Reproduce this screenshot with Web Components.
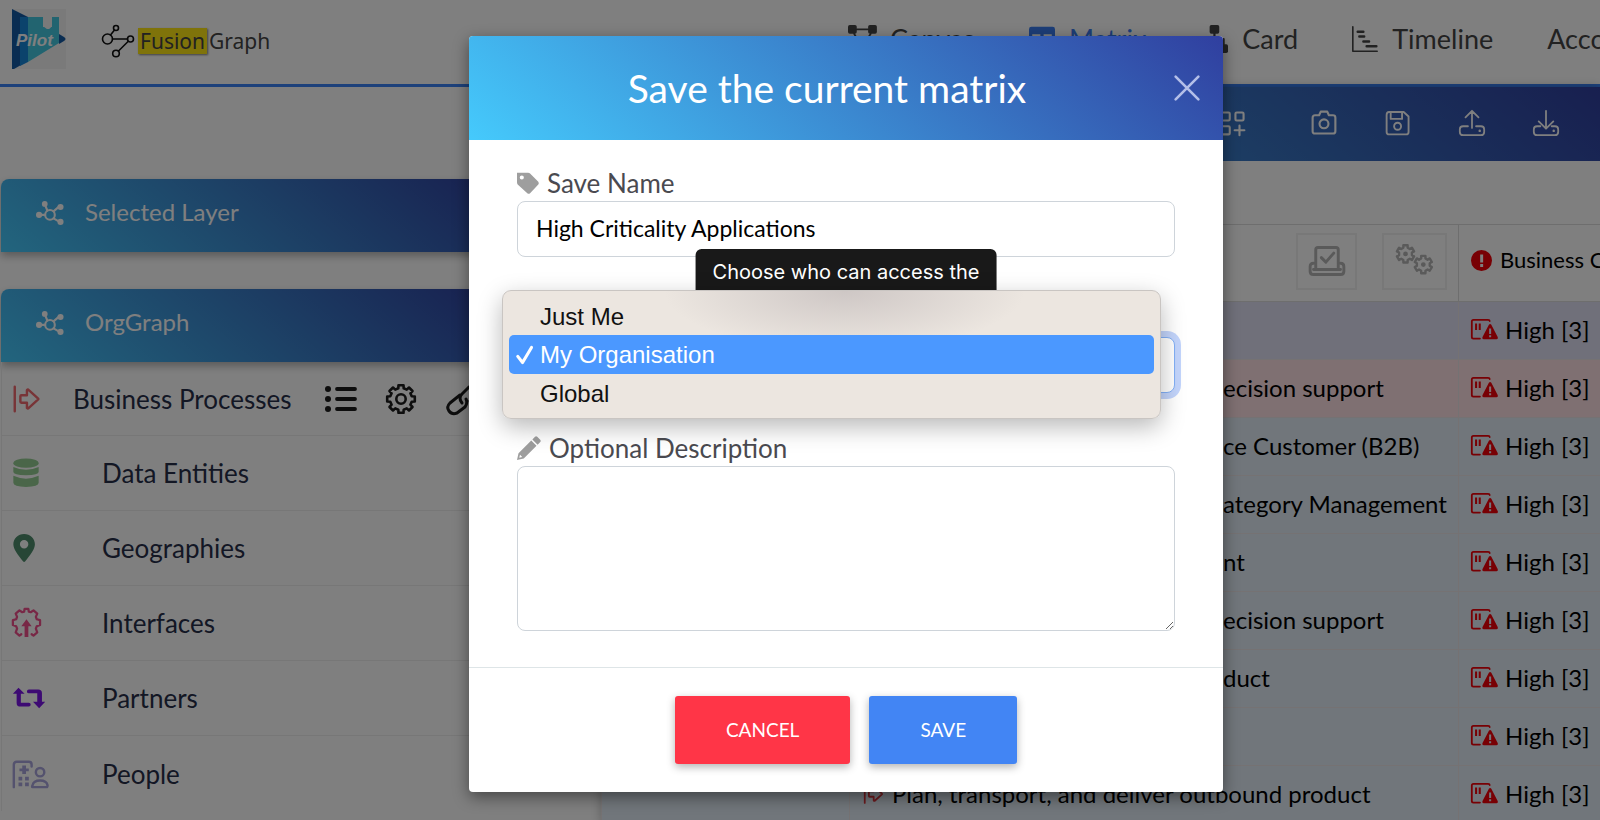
<!DOCTYPE html>
<html lang="en">
  <head>
    <meta charset="UTF-8" />
    <meta name="viewport" content="width=device-width, initial-scale=1.0" />
    <title>FusionGraph - Matrix</title>
    <style>
      body {
        margin: 0;
        font-family: Lato, "Open Sans", sans-serif;
        overflow: hidden;
      }
    </style>
  </head>
  <body>
    <fusion-app>
      <app-header slot="header"></app-header>

      <side-panel slot="side" heading="Selected Layer"></side-panel>
      <side-panel slot="side" heading="OrgGraph">
        <layer-item icon="process" color="#f0696f" tools>Business Processes</layer-item>
        <layer-item icon="database" color="#94cd92">Data Entities</layer-item>
        <layer-item icon="pin" color="#4f8c6c">Geographies</layer-item>
        <layer-item icon="interface" color="#f0508c">Interfaces</layer-item>
        <layer-item icon="swap" color="#7a14e6">Partners</layer-item>
        <layer-item icon="people" color="#a9a5dc">People</layer-item>
      </side-panel>

      <matrix-toolbar slot="main"></matrix-toolbar>
      <matrix-table slot="main"></matrix-table>

      <save-dialog slot="dialog">
        <span slot="title">Save the current matrix</span>
      </save-dialog>
    </fusion-app>

    <template id="app-template">
      <style>
        :host {
          display: block;
          position: relative;
          height: 100vh;
          overflow: hidden;
          background: #fff;
        }

        .columns {
          display: grid;
          grid-template-columns: 601px 1fr;
        }

        .side {
          display: flex;
          flex-direction: column;
          gap: 37px;
          padding: 92px 100px 0 1px;
        }

        .main {
          min-width: 0;
          box-shadow: 0 0 10px rgba(0, 0, 0, 0.25);
        }

        .overlay {
          position: absolute;
          inset: 0;
          display: flex;
          justify-content: center;
          align-items: flex-start;
          padding: 36px 0 0 92px;
          background: rgba(0, 0, 0, 0.5);
        }
      </style>
      <slot name="header"></slot>
      <div class="columns">
        <aside class="side"><slot name="side"></slot></aside>
        <main class="main"><slot name="main"></slot></main>
      </div>
      <div class="overlay"><slot name="dialog"></slot></div>
    </template>

    <template id="header-template">
      <style>
        :host {
          display: flex;
          align-items: center;
          height: 84px;
          border-bottom: 3px solid #3a82f7;
          color: #444;
          overflow: hidden;
        }

        .logo {
          display: block;
          width: 54px;
          height: 60px;
          margin: 0 36px 6px 12px;
          flex: none;
        }

        .brand {
          display: flex;
          align-items: center;
          gap: 4px;
          flex: 1 0 0;
          padding-bottom: 2px;
          font: 21px/28px "Noto Sans", sans-serif;
          color: #444;
        }

        .brand ui-icon {
          color: #111;
        }

        mark {
          display: inline-block;
          margin-right: 2px;
          padding: 0 2px;
          background: #ffe614;
          color: #444;
          line-height: 26px;
          box-shadow: 1px 1px 2px rgba(0, 0, 0, 0.5);
        }

        nav {
          display: flex;
          gap: 54px;
          flex: 0 0 752px;
          min-width: 0;
          padding-bottom: 6px;
        }

        a {
          display: flex;
          align-items: center;
          gap: 14px;
          font-size: 27px;
          line-height: 32px;
          color: inherit;
          text-decoration: none;
          white-space: nowrap;
        }

        a.active {
          color: #3a7df0;
        }
      </style>
      <svg class="logo" viewBox="0 0 54 60" role="img" aria-label="Pilot logo">
        <rect width="54" height="60" fill="#f4f4f4" />
        <path d="M0 0 16 8v44L2 60H0z" fill="#145aa4" />
        <path d="M8 8h8v45l-8 4z" fill="#1787d8" />
        <path d="M16 8h15v10c3 0 2 2 5 2s2-2 4-2V8h7v26L16 53z" fill="#44c8e0" />
        <path d="M47 25l5 3q3 2 0 4l-5 3z" fill="#145aa4" />
        <text x="4" y="37" font-family="Liberation Sans Narrow, Liberation Sans, sans-serif" font-size="17" font-weight="bold" font-style="italic" fill="#fff">Pilot</text>
      </svg>
      <div class="brand">
        <ui-icon name="graph" size="32"></ui-icon>
        <span><mark>Fusion</mark>Graph</span>
      </div>
      <nav>
        <a href="#canvas"><ui-icon name="canvas" size="28"></ui-icon>Canvas</a>
        <a href="#matrix" class="active"><ui-icon name="grid" size="26"></ui-icon>Matrix</a>
        <a href="#card"><ui-icon name="card" size="28"></ui-icon>Card</a>
        <a href="#timeline"><ui-icon name="timeline" size="26"></ui-icon>Timeline</a>
        <a href="#account">Account</a>
      </nav>
    </template>

    <template id="panel-template">
      <style>
        :host {
          display: block;
        }

        header {
          display: flex;
          align-items: center;
          box-sizing: border-box;
          gap: 21px;
          height: 73px;
          padding: 0 0 4px 35px;
          border-radius: 8px 8px 0 0;
          background: linear-gradient(40deg, #45cafc, #303f9f);
          box-shadow: 0 4px 8px rgba(0, 0, 0, 0.3);
          color: #fff;
        }

        h2 {
          margin: 0;
          padding-bottom: 4px;
          font-size: 24px;
          line-height: 32px;
          font-weight: 400;
        }

        .items {
          border-left: 1px solid #eee;
        }
      </style>
      <header>
        <ui-icon name="network" size="28"></ui-icon>
        <h2></h2>
      </header>
      <div class="items"><slot></slot></div>
    </template>

    <template id="layer-template">
      <style>
        :host {
          display: flex;
          align-items: center;
          box-sizing: border-box;
          height: 75px;
          padding-left: 9px;
          border-bottom: 1px solid #eee;
          color: #272e49;
          font-size: 26px;
          line-height: 32px;
        }

        :host([tools]) {
          height: 74px;
        }

        :host(:last-child) {
          border-bottom: 0;
        }

        .icon {
          flex: 0 0 91px;
        }

        :host([tools]) .icon {
          flex-basis: 62px;
        }

        .tools {
          display: none;
          gap: 28px;
          margin-left: auto;
          padding-right: 24px;
        }

        :host([tools]) .tools {
          display: flex;
        }

        button {
          padding: 0;
          border: 0;
          background: none;
          color: #1c1c1c;
        }
      </style>
      <ui-icon class="icon" size="32"></ui-icon>
      <slot></slot>
      <div class="tools">
        <button aria-label="List"><ui-icon name="list" size="32"></ui-icon></button>
        <button aria-label="Settings"><ui-icon name="gear" size="32"></ui-icon></button>
        <button aria-label="Link"><ui-icon name="link" size="32"></ui-icon></button>
      </div>
    </template>

    <template id="toolbar-template">
      <style>
        :host {
          display: flex;
          justify-content: flex-end;
          align-items: center;
          box-sizing: border-box;
          gap: 48px;
          height: 74px;
          padding: 0 41px 2px 0;
          background: linear-gradient(40deg, #45cafc, #303f9f);
        }

        button {
          padding: 0;
          border: 0;
          background: none;
          color: #fff;
        }

        .apart {
          margin-right: 17px;
        }
      </style>
      <button class="apart" aria-label="Add view"><ui-icon name="addview" size="26"></ui-icon></button>
      <button aria-label="Snapshot"><ui-icon name="camera" size="26"></ui-icon></button>
      <button aria-label="Save"><ui-icon name="save" size="26"></ui-icon></button>
      <button aria-label="Upload"><ui-icon name="upload" size="26"></ui-icon></button>
      <button aria-label="Download"><ui-icon name="download" size="26"></ui-icon></button>
    </template>

    <template id="table-template">
      <style>
        :host {
          display: block;
          padding-top: 63px;
        }

        table {
          width: 100%;
          table-layout: fixed;
          border-collapse: collapse;
          font-size: 24px;
          line-height: 28px;
        }

        .layer-col {
          width: 248px;
        }

        .process-col {
          width: 609px;
        }

        th {
          height: 72px;
          padding: 0 0 4px;
          border: 1px solid #ddd;
          font-size: 22px;
          font-weight: 400;
        }

        td {
          height: 57px;
          padding: 0;
          border: 1px solid #ebe4e6;
          background: #e2edf7;
        }

        th:last-child,
        td:last-child {
          border-right: 0;
        }

        tr.lilac td {
          background: #e1e1f5;
        }

        tr.rose td {
          background: #ffe1e5;
        }

        .actions {
          display: flex;
          justify-content: flex-end;
          gap: 25px;
          padding-right: 11px;
        }

        .actions button {
          width: 61px;
          height: 57px;
          padding: 0;
          border: 2px solid #f0f0f0;
          background: none;
          color: #b4b4b4;
        }

        .actions button:last-child {
          width: 65px;
        }

        .actions ui-icon {
          margin: auto;
        }

        .cell {
          display: flex;
          align-items: center;
          gap: 8px;
          padding: 0 0 2px 12px;
          white-space: nowrap;
          overflow: hidden;
        }

        .tail {
          padding: 0 0 2px 373px;
          white-space: nowrap;
        }

        .alert {
          color: #f00008;
        }

        .process {
          color: #d8373d;
        }
      </style>
      <table>
        <colgroup>
          <col class="layer-col" />
          <col class="process-col" />
          <col />
        </colgroup>
        <thead>
          <tr>
            <th></th>
            <th>
              <div class="actions">
                <button aria-label="Check"><ui-icon name="laptop" size="36"></ui-icon></button>
                <button aria-label="Configure"><ui-icon name="gears" size="38"></ui-icon></button>
              </div>
            </th>
            <th>
              <div class="cell">
                <ui-icon class="alert" name="alert" size="21"></ui-icon>Business Criticality
              </div>
            </th>
          </tr>
        </thead>
        <tbody></tbody>
      </table>
    </template>

    <template id="dialog-template">
      <style>
        :host {
          display: block;
          flex: 0 1 754px;
          border-radius: 4px;
          background: #fff;
          box-shadow: 0 5px 16px rgba(0, 0, 0, 0.45);
        }

        * {
          box-sizing: border-box;
        }

        header {
          display: flex;
          align-items: center;
          gap: 10px;
          height: 104px;
          padding: 0 22px;
          border-radius: 4px 4px 0 0;
          background: linear-gradient(40deg, #45cafc, #303f9f);
          color: #fff;
        }

        h1 {
          flex: 1;
          margin: 0;
          font-size: 39px;
          line-height: 48px;
          font-weight: 400;
          text-align: center;
        }

        .close {
          padding: 0;
          border: 0;
          background: none;
          color: #b4bfe8;
        }

        form {
          display: flex;
          flex-direction: column;
          gap: 40px;
          padding: 28px 48px 36px;
        }

        .field {
          display: flex;
          flex-direction: column;
          gap: 3px;
        }

        label,
        .field-head {
          display: flex;
          align-items: center;
          gap: 8px;
          min-height: 30px;
          font-size: 26px;
          line-height: 30px;
          color: #4a4a50;
        }

        label ui-icon {
          color: #9e9e9e;
        }

        input,
        select,
        textarea {
          width: 100%;
          height: 56px;
          margin: 0;
          padding: 0 18px;
          border: 1px solid #ced4da;
          border-radius: 8px;
          background: #fff;
          color: #000;
          font: 23px/32px Lato, sans-serif;
          outline: 0;
        }

        input {
          padding-bottom: 2px;
        }

        select {
          appearance: none;
          border-color: #83b1f8;
          box-shadow: 0 0 0 6px #c3d5fc;
        }

        textarea {
          display: block;
          height: 165px;
          resize: both;
        }

        .access {
          position: relative;
          padding-top: 7px;
        }

        .tooltip {
          position: absolute;
          bottom: 100%;
          left: 50%;
          height: 49px;
          margin-bottom: -1px;
          padding: 9px 17px;
          border-radius: 6px;
          background: #191919;
          color: #fff;
          font: 20px/28px Inter, sans-serif;
          white-space: nowrap;
          transform: translateX(-50%);
        }

        .menu {
          position: absolute;
          top: -7px;
          left: -15px;
          right: 14px;
          padding: 6px;
          border: 1px solid #c9c5c2;
          border-radius: 9px;
          background: radial-gradient(ellipse 180px 60px at 52% 0, #cec7c5, #ece6e0);
          box-shadow: 0 8px 24px rgba(0, 0, 0, 0.28);
          font: 24px/39px "Liberation Sans", Arial, sans-serif;
        }

        .option {
          display: flex;
          align-items: center;
          gap: 3px;
          width: 100%;
          height: 38px;
          padding: 0 6px;
          border: 0;
          border-radius: 5px;
          background: none;
          color: #111;
          font: inherit;
        }

        .option:nth-child(2) {
          height: 39px;
        }

        .option ui-icon {
          visibility: hidden;
        }

        .option[aria-selected="true"] {
          background: #4b98ff;
          color: #fff;
        }

        .option[aria-selected="true"] ui-icon {
          visibility: visible;
        }

        footer {
          display: flex;
          justify-content: center;
          gap: 19px;
          padding: 28px;
          border-top: 1px solid #dee5e7;
        }

        footer button {
          height: 68px;
          padding: 0 51px;
          border: 0;
          border-radius: 3px;
          background: #ff3547;
          box-shadow: 0 3px 8px rgba(0, 0, 0, 0.3);
          color: #fff;
          font: 19px/24px Lato, sans-serif;
          text-transform: uppercase;
        }

        footer .primary {
          background: #4285f4;
        }
      </style>
      <header>
        <h1><slot name="title"></slot></h1>
        <button class="close" aria-label="Close"><ui-icon name="close" size="28"></ui-icon></button>
      </header>
      <form>
        <div class="field">
          <label for="save-name"><ui-icon name="tag" size="22"></ui-icon>Save Name</label>
          <input id="save-name" type="text" value="High Criticality Applications" />
        </div>
        <div class="field access">
          <div class="field-head"></div>
          <select aria-label="Access">
            <option>Just Me</option>
            <option selected>My Organisation</option>
            <option>Global</option>
          </select>
          <div class="tooltip" role="tooltip">Choose who can access the</div>
          <div class="menu" role="listbox" aria-label="Access">
            <button type="button" class="option" role="option" aria-selected="false"><ui-icon name="tick" size="22"></ui-icon>Just Me</button>
            <button type="button" class="option" role="option" aria-selected="true"><ui-icon name="tick" size="22"></ui-icon>My Organisation</button>
            <button type="button" class="option" role="option" aria-selected="false"><ui-icon name="tick" size="22"></ui-icon>Global</button>
          </div>
        </div>
        <div class="field">
          <label for="description"><ui-icon name="pencil" size="24"></ui-icon>Optional Description</label>
          <textarea id="description"></textarea>
        </div>
      </form>
      <footer>
        <button type="button">Cancel</button>
        <button type="button" class="primary">Save</button>
      </footer>
    </template>

    <script>
      const stroke = (width, body) =>
        `<g fill="none" stroke="currentColor" stroke-width="${width}" stroke-linecap="round" stroke-linejoin="round">${body}</g>`;

      // outline of a cog with evenly spread teeth, centred on cx, cy
      const cog = (cx, cy, inner, outer, teeth = 8) => {
        const points = [];
        const half = Math.PI / teeth;
        for (let i = 0; i < teeth; i++) {
          const mid = i * half * 2 - Math.PI / 2;
          [[-0.62, inner], [-0.45, outer], [0.45, outer], [0.62, inner]].forEach(([turn, r]) => {
            const angle = mid + turn * half;
            points.push(
              `${(cx + r * Math.cos(angle)).toFixed(1)} ${(cy + r * Math.sin(angle)).toFixed(1)}`
            );
          });
        }
        return `M${points.join("L")}z`;
      };

      // every icon is drawn on a 32 x 32 grid
      const icons = {
        graph: stroke(1.6, '<circle cx="5.500" cy="14" r="5"/><circle cx="14" cy="3" r="2.500"/><circle cx="28.500" cy="14" r="3"/><circle cx="14" cy="28.500" r="3.300"/><path d="M8.500 10 12.500 5M10.500 14h15M26.300 16.300 16.500 26"/>'),
        canvas: '<rect width="10" height="10" rx="2"/><rect x="23" width="10" height="10" rx="2"/><rect x="11" y="22" width="10" height="10" rx="2"/>' + stroke(2, '<path d="M10 5h13M7 10l7 12M26 10l-8 12"/>'),
        grid: '<path d="M3 1h26q3 0 3 3v24q0 3-3 3H3q-3 0-3-3V4q0-3 3-3zm1 9v7h10v-7zm14 0v7h10v-7zM4 20v7h10v-7zm14 0v7h10v-7z" fill-rule="evenodd"/>',
        card: '<rect x="11" width="11" height="10" rx="2"/><rect y="22" width="11" height="10" rx="2"/><rect x="21" y="22" width="11" height="10" rx="2"/>' + stroke(2.5, '<path d="M16.500 9v7M5 23v-7h22v7"/>'),
        timeline: stroke(2, '<path d="M1 1v30h30"/>') + stroke(3, '<path d="M7 7h7M9 13h6M14 19h7M18 25h12"/>'),
        network: stroke(2.4, '<circle cx="16" cy="17" r="5.500"/><path d="M10 17H4M13 12l-3-7M20 13l7-6M20 21l7 4"/>') + '<circle cx="3.500" cy="17" r="3.500"/><circle cx="10" cy="4.500" r="3.300"/><circle cx="28" cy="8" r="3.500"/><circle cx="28" cy="25" r="3.500"/>',
        process: stroke(2.6, '<path d="M4 3v26M11 12h6V6.500q1-1 2 0l10 9q.5.500 0 1l-10 9q-1 1-2 0V20h-6q-1 0-1-1v-6q0-1 1-1z"/>'),
        database: '<ellipse cx="16" cy="5.500" rx="13.500" ry="5"/><path d="M2.500 9.500q13.500 6 27 0v5.500q0 3-13.500 3.500-13.500-.5-13.500-3.500zM2.500 19q13.500 6 27 0v7.500q0 4-13.500 4.500-13.500-.5-13.500-4.500z"/>',
        pin: '<path fill-rule="evenodd" d="M14 1C7.500 1 2.500 6 2.500 12 2.500 17 7 23 13 30.500q1 1 2 0c6-7.500 10.500-13.500 10.500-18.500C25.500 6 20.500 1 14 1zm0 6.500a4.500 4.500 0 1 1 0 9 4.500 4.500 0 0 1 0-9z"/>',
        interface: stroke(2.4, '<path d="M11 28l-2 1.500-4-3.500 1.500-4-1-2.500L2 18v-5l3.500-1 1-2.500L5 6l4-3.500 3 2 2-.500.500-3h4l.5 3 2 .5 3-2L28 6l-1.500 3.500 1 2.500 3.500 1v5l-3.500 1.500-1 2.500 1.500 4-4 3.500-2-1.500"/>') + '<path d="M16.500 12 22 19.500h-3.500V31h-4V19.500H11z"/>',
        swap: '<path d="M8 5l6.500 6.500h-4V21H19q2 0 2 2t-2 2H9q-3 0-3-4v-9.500H2zM19 7h10q4 0 4 4v9h3.500L30 27l-6.500-7H28v-9h-9q-2 0-2-2t2-2z"/>',
        people: stroke(2.6, '<path d="M3 30V6q0-3 3-3h13q3 0 3 3v2M23 30h15q1 0 1-2-1-5-8-5t-8 5q-1 2 0 2z"/><circle cx="31" cy="14" r="4.500"/>') + '<path d="M12 7h4v3h3v3h-3v3h-4v-3H9v-3h3zM8 19h4v4H8zM15 19h4v4h-4zM8 25h4v4H8zM15 25h4v4h-4z"/>',
        list: '<circle cx="3" cy="6" r="3"/><circle cx="3" cy="16" r="3"/><circle cx="3" cy="26" r="3"/>' + stroke(3.8, '<path d="M12 6h18M12 16h18M12 26h18"/>'),
        gear: stroke(2.6, `<path d="${cog(16, 16, 11, 14)}"/><circle cx="16" cy="16" r="4.700"/>`),
        link: stroke(3, '<path d="M15 12l-10 8q-4 4-1 8t8 2l8-6q3-4 1-8"/><path d="M17 20q-4-5 0-9l7-7q5-3 8 1t-1 8l-6 5"/>'),
        addview: stroke(2.6, '<rect x="2" y="3" width="10" height="10" rx="1.500"/><rect x="19" y="3" width="10" height="10" rx="1.500"/><rect x="2" y="20" width="10" height="10" rx="1.500"/><path d="M24 19v12M18 25h12"/>'),
        camera: stroke(2.6, '<path d="M5 6.500h5L12 2h8l2 4.500h5q3 0 3 3V26q0 3-3 3H5q-3 0-3-3V9.500q0-3 3-3z"/><circle cx="16" cy="17" r="5.500"/>'),
        save: stroke(2.3, '<path d="M5 2.500h18l6 5.500v19q0 3-3 3H5q-3 0-3-3v-21q0-3.500 3-3.500zM7 3v8h14V3"/><circle cx="15.500" cy="20" r="4.300"/>'),
        upload: stroke(2.2, '<path d="M16 22V1M8 9l8-8 8 8M11 20H5q-4 0-4 4v3q0 4 4 4h22q4 0 4-4v-3q0-4-4-4h-6"/><path d="M25.500 25.500v.2" stroke-width="3"/>'),
        download: stroke(2.2, '<path d="M16 1v21M7 14l9 9 9-9M9 20H5q-4 0-4 4v3q0 4 4 4h22q4 0 4-4v-3q0-4-4-4h-4"/><path d="M25.500 25.500v.2" stroke-width="3"/>'),
        laptop: stroke(2.6, '<path d="M6 22V6q0-2 2-2h16q2 0 2 2v16M4 18q-3 0-3 3v4q0 3 3 3h24q3 0 3-3v-4q0-3-3-3M4 23.500h24M11 13l4 4 7-8"/>'),
        gears: stroke(2, `<path d="${cog(8, 10, 5.500, 7.500, 6)}"/><circle cx="8" cy="10" r="1"/><path d="${cog(23, 19, 5.500, 7.500, 6)}"/><circle cx="23" cy="19" r="1"/>`),
        alert: '<path fill-rule="evenodd" d="M16 0a16 16 0 1 1 0 32 16 16 0 0 1 0-32zM14 7v12h4.500V7zm0 14.500V26h4.500v-4.500z"/>',
        risk: stroke(2.2, '<path d="M23 5q0-1.500-2-1.500H3q-2 0-2 2v19q0 2 2 2h8"/>') + '<path d="M5 8h2.500v8H5zM9.500 8H12v8H9.500z"/><path fill-rule="evenodd" d="M22 9.500q1.500-1.500 3 0l8 15.500q.5 2.500-1.500 2.500h-16q-2 0-1.500-2.500zM22.300 14v7h2.500v-7zm0 8.500V25h2.500v-2.500z"/>',
        tag: '<path fill-rule="evenodd" d="M0 1h16q2 0 3 1l12 12q1.500 2 0 4L19 31q-2 1.500-4 0L1 18q-1-1-1-3zm7 4a3 3 0 1 0 0 6 3 3 0 0 0 0-6z"/>',
        pencil: '<path fill-rule="evenodd" d="M19 6l7 7L9 30l-9 2 2-9zM20.500 4.500l3.500-3.500q1.500-1.500 3 0L31 5q1.500 1.500 0 3l-3.500 3.500zM4 25l-1 4 4-1z"/>',
        tick: stroke(4.5, '<path d="M4 18l7 9L24 5"/>'),
        close: stroke(3, '<path d="M3 3l26 26M29 3 3 29"/>')
      };

      class UiIcon extends HTMLElement {
        connectedCallback() {
          if (this.shadowRoot) return;
          const size = Number(this.getAttribute("size")) || 24;
          this.attachShadow({ mode: "open" }).innerHTML = `
            <style>
              :host { display: block; flex: none; width: ${size}px; height: ${size}px; }
              svg { display: block; overflow: visible; }
            </style>
            <svg width="${size}" height="${size}" viewBox="0 0 32 32" fill="currentColor" aria-hidden="true">${icons[this.getAttribute("name")] || ""}</svg>`;
        }
      }

      class TemplateElement extends HTMLElement {
        connectedCallback() {
          if (this.shadowRoot) return;
          const template = document.getElementById(this.constructor.template);
          this.attachShadow({ mode: "open" }).appendChild(template.content.cloneNode(true));
          this.render();
        }

        render() {}
      }

      class FusionApp extends TemplateElement {
        static template = "app-template";
      }

      class AppHeader extends TemplateElement {
        static template = "header-template";
      }

      class SidePanel extends TemplateElement {
        static template = "panel-template";

        render() {
          this.shadowRoot.querySelector("h2").textContent = this.getAttribute("heading");
        }
      }

      class LayerItem extends TemplateElement {
        static template = "layer-template";

        render() {
          const old = this.shadowRoot.querySelector(".icon");
          const icon = document.createElement("ui-icon");
          icon.className = "icon";
          icon.setAttribute("name", this.getAttribute("icon"));
          icon.setAttribute("size", "30");
          icon.style.color = this.getAttribute("color");
          old.replaceWith(icon);
        }
      }

      class MatrixToolbar extends TemplateElement {
        static template = "toolbar-template";
      }

      class MatrixTable extends TemplateElement {
        static template = "table-template";

        render() {
          const rows = [
            { tone: "lilac" },
            { tone: "rose", tail: "ecision support" },
            { tail: "ce Customer (B2B)" },
            { tail: "ategory Management" },
            { tail: "nt" },
            { tail: "ecision support" },
            { tail: "duct" },
            {},
            { full: "Plan, transport, and deliver outbound product" }
          ];
          this.shadowRoot.querySelector("tbody").innerHTML = rows
            .map(
              ({ tone = "", tail = "", full }) => `
              <tr class="${tone}">
                <td></td>
                <td>${
                  full
                    ? `<div class="cell"><ui-icon class="process" name="process" size="22"></ui-icon>${full}</div>`
                    : `<div class="tail">${tail}</div>`
                }</td>
                <td><div class="cell"><ui-icon class="alert" name="risk" size="26"></ui-icon>High [3]</div></td>
              </tr>`
            )
            .join("");
        }
      }

      class SaveDialog extends TemplateElement {
        static template = "dialog-template";
      }

      customElements.define("ui-icon", UiIcon);
      customElements.define("fusion-app", FusionApp);
      customElements.define("app-header", AppHeader);
      customElements.define("side-panel", SidePanel);
      customElements.define("layer-item", LayerItem);
      customElements.define("matrix-toolbar", MatrixToolbar);
      customElements.define("matrix-table", MatrixTable);
      customElements.define("save-dialog", SaveDialog);
    </script>
  </body>
</html>
